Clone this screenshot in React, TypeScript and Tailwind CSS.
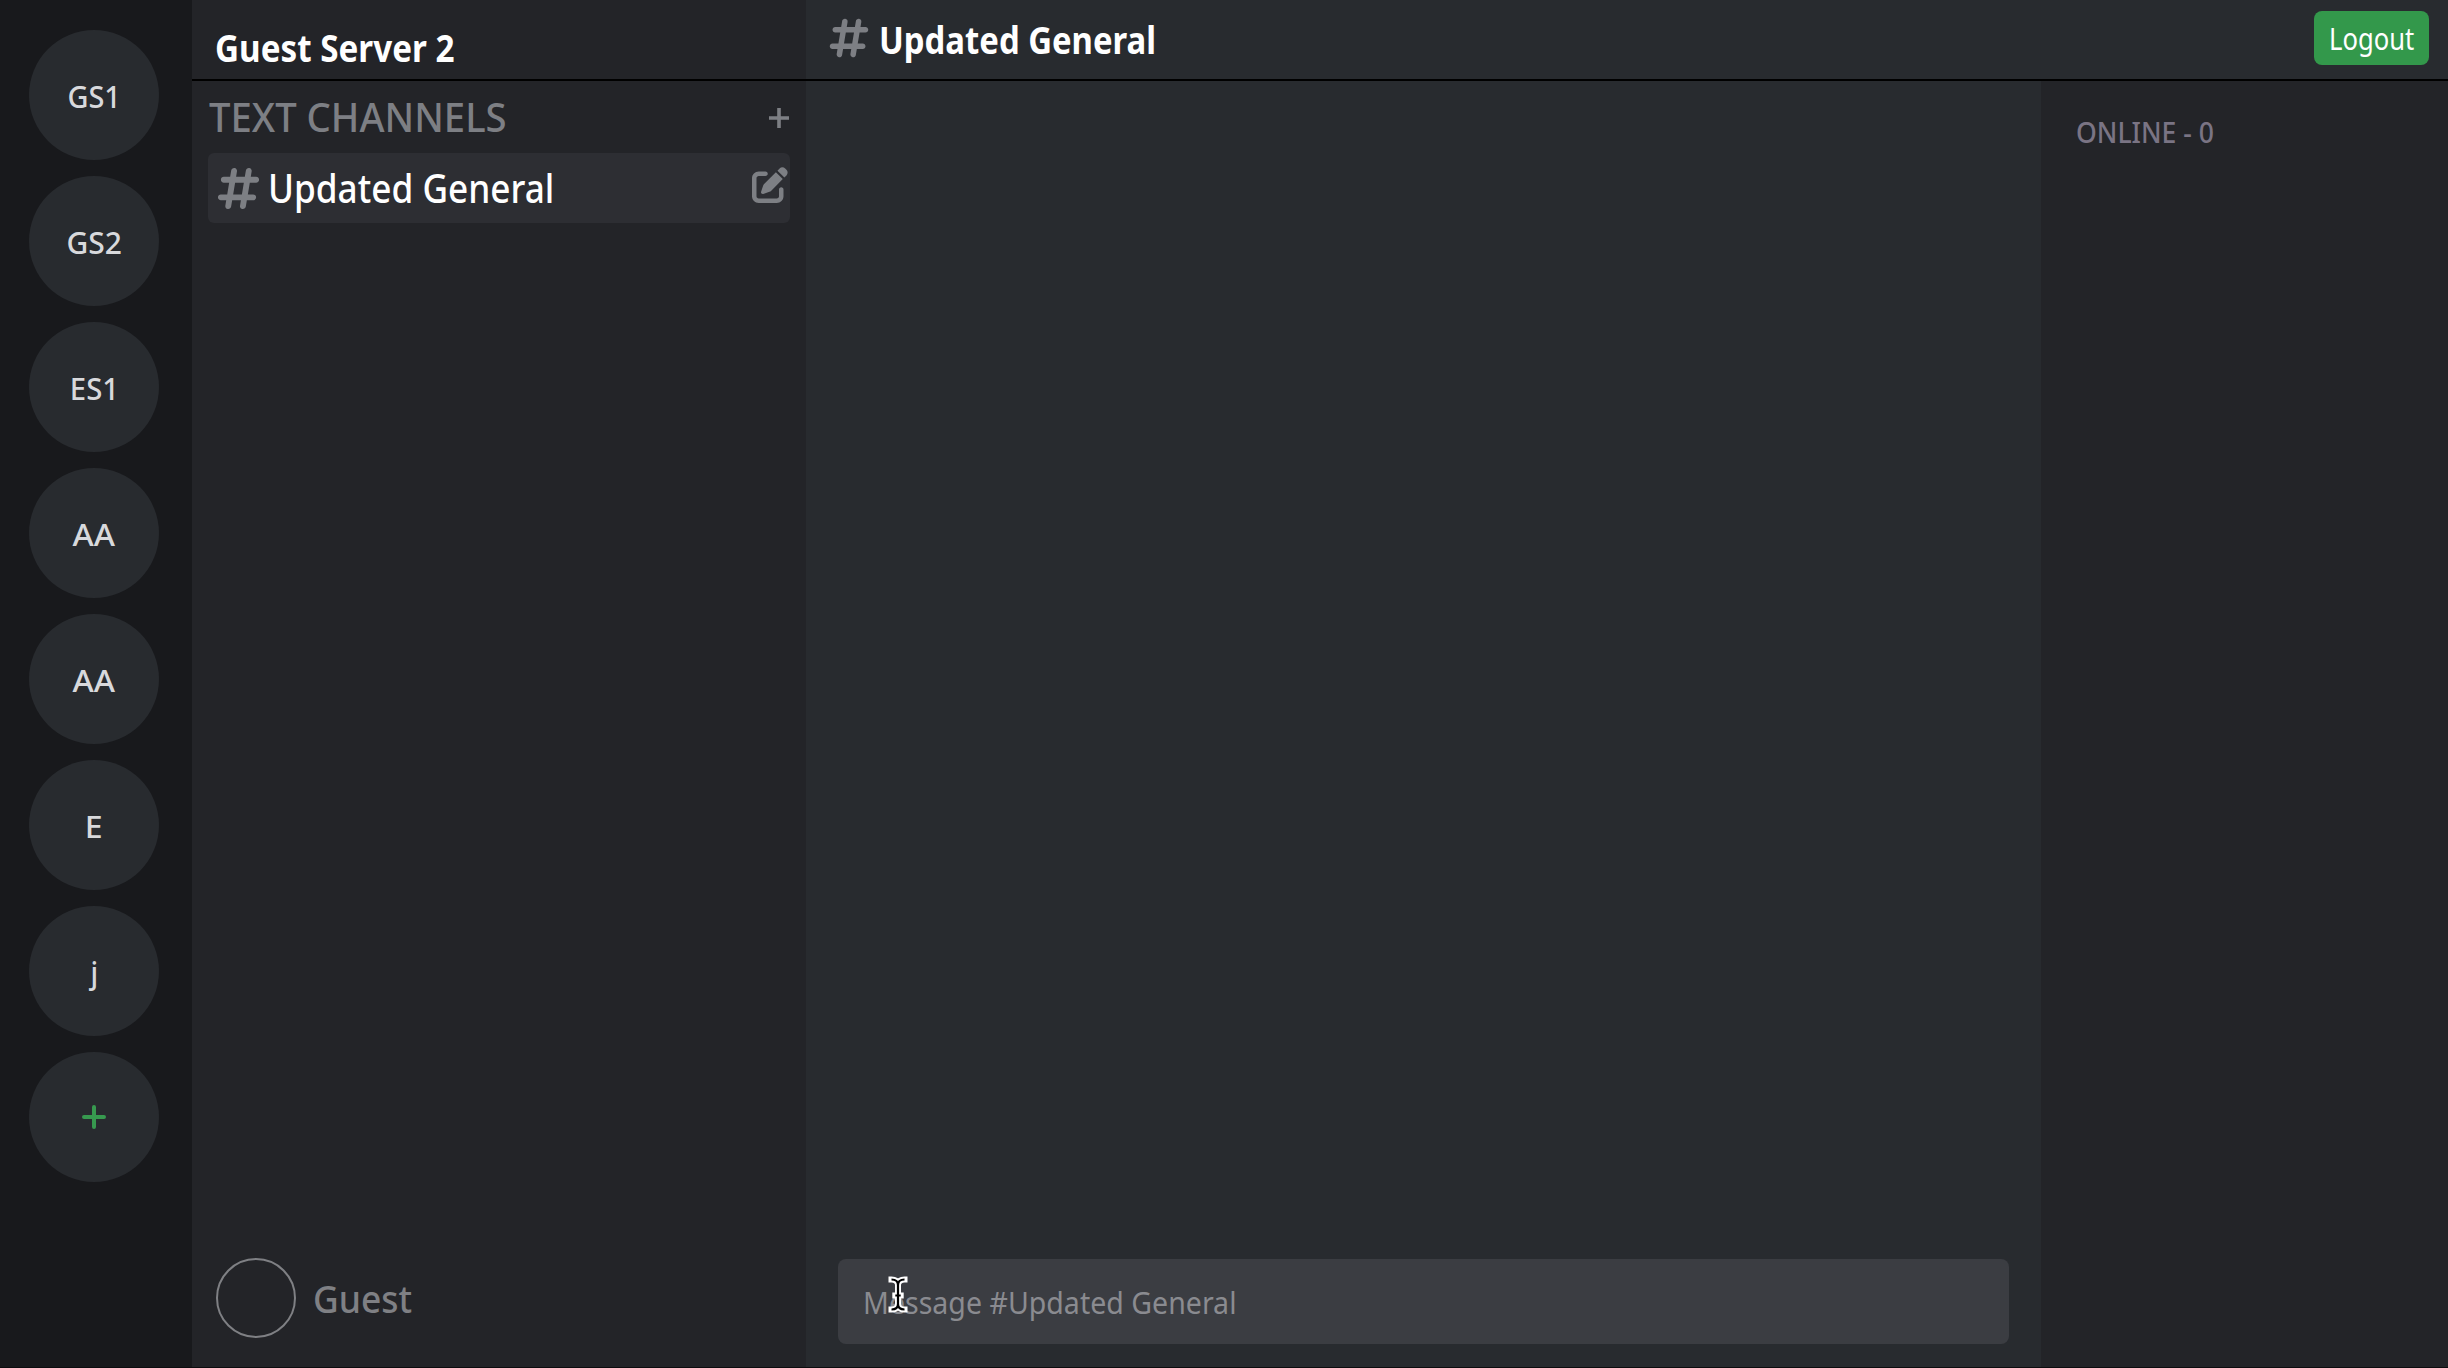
import { FaHashtag, FaPenToSquare } from "react-icons/fa6";

const servers = [
  { name: "GS1", fit: "scale-x-[0.918]", nudge: "pl-px" },
  { name: "GS2", fit: "scale-x-[0.952]", nudge: "" },
  { name: "ES1", fit: "scale-x-[0.93]", nudge: "pl-px" },
  { name: "AA", fit: "scale-x-[1.03]", nudge: "" },
  { name: "AA", fit: "scale-x-[1.03]", nudge: "" },
  { name: "E", fit: "scale-x-[1.02]", nudge: "" },
  { name: "j", fit: "scale-x-[0.9]", nudge: "pl-px" },
];

function ServerRail() {
  return (
    <nav className="flex w-48 shrink-0 flex-col gap-4 bg-[#18191c] pt-[30px] pl-[29px]">
      {servers.map((s, i) => (
        <button
          key={i}
          className={`flex size-[130px] items-center justify-center rounded-full bg-[#282b2f] pt-px text-[31.5px] leading-none font-medium text-[#d8d9dc] ${s.nudge}`}
        >
          <span className={`inline-block ${s.fit}`}>{s.name}</span>
        </button>
      ))}
      <button
        aria-label="Add server"
        className="flex size-[130px] items-center justify-center rounded-full bg-[#282b2f]"
      >
        <svg viewBox="0 0 24 24" className="size-6" stroke="#37994f" strokeWidth="4" strokeLinecap="round">
          <path d="M12 2v20M2 12h20" />
        </svg>
      </button>
    </nav>
  );
}

function ChannelList() {
  return (
    <aside className="flex w-[614px] shrink-0 flex-col bg-[#232428]">
      <header className="flex h-[81px] shrink-0 items-start border-b-2 border-black pt-[29px] pl-[23.2px]">
        <h1 className="origin-left scale-x-[0.886] text-[37.5px] leading-none font-bold whitespace-nowrap text-white">
          Guest Server 2
        </h1>
      </header>
      <div className="flex h-14 items-center justify-between pt-4 pr-[17px] pl-[17px] text-[#7d7f84]">
        <h2 className="origin-left scale-x-[0.956] text-[40px] leading-none font-medium whitespace-nowrap">
          TEXT CHANNELS
        </h2>
        <svg viewBox="0 0 20 20" className="mt-0.5 size-5" stroke="currentColor" strokeWidth="3.6">
          <path d="M10 0v20M0 10h20" />
        </svg>
      </div>
      <div className="mx-4 mt-4 flex h-[70px] items-center rounded-md bg-[#2d2e33] pr-[2px] pl-[7px] text-[#7d7f84]">
        <FaHashtag className="size-[47px]" />
        <span className="mt-[2px] ml-[5.5px] origin-left scale-x-[0.891] text-[39.5px] leading-none font-[550] whitespace-nowrap text-white">
          Updated General
        </span>
        <FaPenToSquare className="mb-1.5 ml-auto size-9" />
      </div>
      <footer className="mt-auto mb-[29px] flex items-center gap-4 pl-6">
        <div className="size-20 rounded-full border-2 border-[#7f8084]" />
        <span className="ml-px origin-left scale-x-[0.92] text-[38.5px] leading-none font-medium text-[#7f8084]">
          Guest
        </span>
      </footer>
    </aside>
  );
}

function TextCursor() {
  const beam =
    "M2.5 3.5C6 3.5 9 5 9 9V28C9 32 6 33.5 2.5 33.5M15.5 3.5C12 3.5 9 5 9 9M9 28C9 32 12 33.5 15.5 33.5M6.3 19.5H11.7";
  return (
    <svg viewBox="0 0 18 37" className="absolute top-[17px] left-[51px] h-[37px] w-[18px] overflow-visible" fill="none">
      <path d={beam} stroke="#fff" strokeWidth="6" strokeLinecap="square" />
      <path d={beam} stroke="#000" strokeWidth="2.2" />
    </svg>
  );
}

function Chat() {
  return (
    <div className="flex min-w-0 flex-1 flex-col bg-[#282b2f]">
      <header className="flex h-[81px] shrink-0 items-start border-b-2 border-black pr-[19px] pl-[21px]">
        <FaHashtag className="mt-4 size-11 text-[#7d7f84]" />
        <h2 className="mt-[21px] ml-[8.4px] origin-left scale-x-[0.876] text-[37.5px] leading-none font-bold whitespace-nowrap text-white">
          Updated General
        </h2>
        <button className="mt-[11px] ml-auto flex h-[54px] w-[115px] items-start rounded-lg bg-[#33984b] pt-[13px] pl-[14.6px] text-[30px] leading-none text-white">
          <span className="inline-block origin-left scale-x-[0.854]">Logout</span>
        </button>
      </header>
      <div className="flex min-h-0 flex-1">
        <main className="flex flex-1 flex-col justify-end px-8 pb-[23px]">
          <div className="relative flex h-[85px] items-center rounded-lg bg-[#3b3d42] pt-[2px] pl-[24.6px]">
            <span className="origin-left scale-x-[0.936] text-[30.5px] leading-none whitespace-nowrap text-[#8a8b90]">
              Message #Updated General
            </span>
            <TextCursor />
          </div>
        </main>
        <aside className="w-[407px] shrink-0 bg-[#232428] pt-[37px] pl-[35px]">
          <h3 className="origin-left scale-x-[0.948] text-[28px] leading-none font-medium whitespace-nowrap text-[#7a7484]">
            ONLINE - 0
          </h3>
        </aside>
      </div>
    </div>
  );
}

export default function App() {
  return (
    <div className="flex h-screen w-full overflow-hidden border-b border-[#0c0c0e] bg-[#232428] font-['Noto_Sans','Open_Sans',sans-serif]">
      <ServerRail />
      <ChannelList />
      <Chat />
    </div>
  );
}
